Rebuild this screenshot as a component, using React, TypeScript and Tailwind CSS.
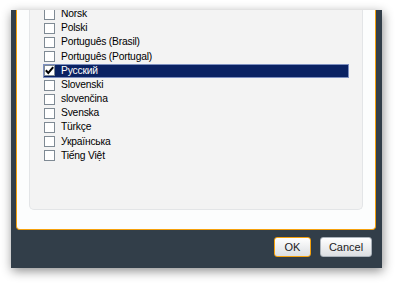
const languages = [
  'Norsk',
  'Polski',
  'Português (Brasil)',
  'Português (Portugal)',
  'Русский',
  'Slovenski',
  'slovenčina',
  'Svenska',
  'Türkçe',
  'Українська',
  'Tiếng Việt',
]

const selected = 'Русский'

function Checkbox({ checked }: { checked: boolean }) {
  return (
    <div className="w-[11px] h-[11px] shrink-0 bg-white border border-[#7f8a94] flex items-center justify-center">
      {checked && (
        <svg width="9" height="9" viewBox="0 0 9 9">
          <path d="M0.8 4.3 L3.3 7 L8.2 1.2" fill="none" stroke="#000" strokeWidth="2" />
        </svg>
      )}
    </div>
  )
}

function LanguageRow({ name }: { name: string }) {
  const active = name === selected
  return (
    <div
      className={
        active
          ? 'h-[14.2px] flex items-center gap-[6px] bg-[#0a2263] border border-[#7d8fc0] text-white'
          : 'h-[14.2px] flex items-center gap-[6px] border border-transparent text-black'
      }
    >
      <Checkbox checked={active} />
      <span className="leading-none">{name}</span>
    </div>
  )
}

export default function App() {
  return (
    <div className="w-[400px] h-[286px] bg-white overflow-hidden pt-[10px] pl-[11px]" style={{ fontFamily: '"Liberation Sans", Arial, sans-serif' }}>
      <div className="w-[371px] h-[258px] bg-[#323e49] flex flex-col pl-[5px] pr-[6px] pb-[11px] shadow-[1px_3px_10px_rgba(0,0,0,0.45)]">
        <div className="h-[220px] bg-[#fcfdfd] border-x border-b border-[#f5a10c] rounded-b-[4px] px-[12px] pb-[19px] overflow-hidden flex flex-col">
          <div className="flex-1 bg-[#f3f3f3] border-x border-b border-[#e3e5e7] rounded-b-[5px] overflow-hidden pl-[13px] pr-[13px]">
            <div className="-mt-[3px] text-[10.3px] tracking-[-0.2px]">
              {languages.map(l => (
                <LanguageRow key={l} name={l} />
              ))}
            </div>
          </div>
        </div>
        <div className="flex justify-end gap-[9px] pt-[7px] pr-[4px]">
          <button className="w-[37px] h-[20px] rounded-[3px] border border-[#f5a10c] bg-gradient-to-b from-white to-[#dcdfe2] text-[11px] text-[#222] leading-none">
            OK
          </button>
          <button className="w-[52px] h-[20px] rounded-[3px] border border-[#aab2ba] bg-gradient-to-b from-white to-[#dcdfe2] text-[11px] text-[#222] leading-none">
            Cancel
          </button>
        </div>
      </div>
    </div>
  )
}
